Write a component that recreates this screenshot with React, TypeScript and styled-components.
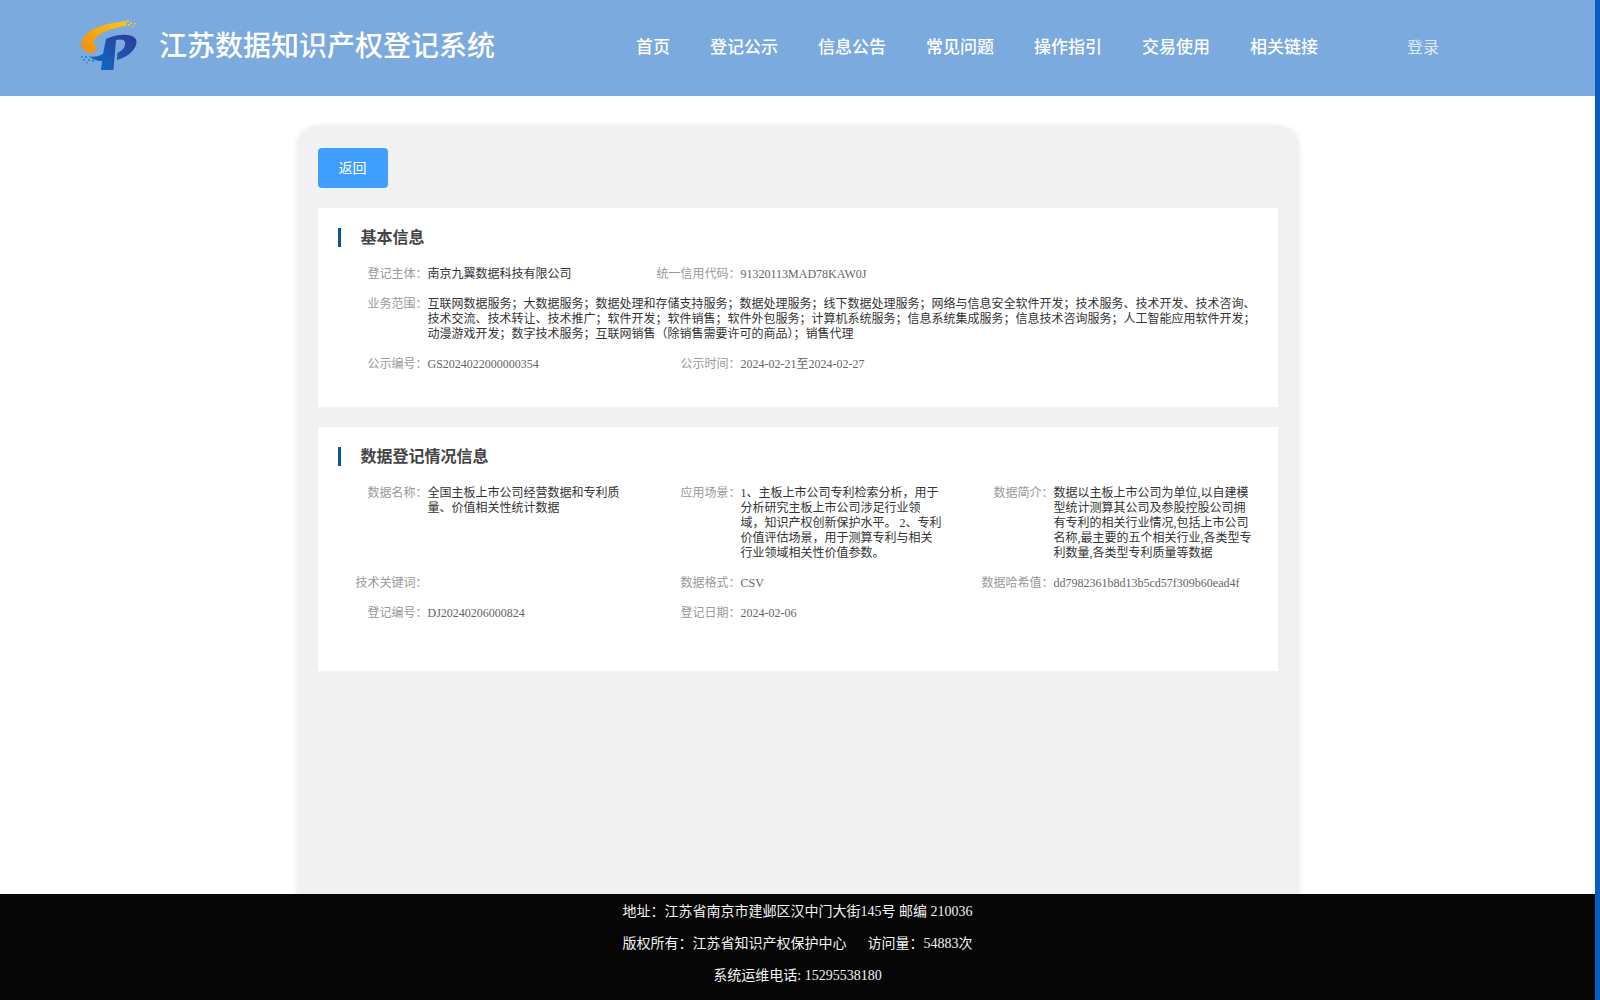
import React from 'react';
import styled, { createGlobalStyle } from 'styled-components';

const GlobalStyle = createGlobalStyle`
  html,
  body {
    margin: 0;
    padding: 0;
    height: 100%;
    overflow: hidden;
    background: #fff;
    font-family: 'Liberation Serif', 'Noto Sans CJK SC', serif;
  }
  #root {
    height: 100%;
  }
`;

const NAV_ITEMS = ['首页', '登记公示', '信息公告', '常见问题', '操作指引', '交易使用', '相关链接'];

const Logo = () => (
  <svg width="60" height="54" viewBox="8 8 60 54">
    <defs>
      <linearGradient id="arc" x1="0" y1="1" x2="1" y2="0">
        <stop offset="0" stopColor="#f08a12" />
        <stop offset="1" stopColor="#f8c81c" />
      </linearGradient>
      <linearGradient id="pee" x1="0" y1="1" x2="1" y2="0">
        <stop offset="0" stopColor="#0a6fc4" />
        <stop offset="1" stopColor="#2f3a9c" />
      </linearGradient>
    </defs>
    <path d="M57 11 C36 13 18 18 12 30 C9 38 15 42 23 44 L27 37 C24 35 23 32 25 29 C30 22 42 18 56 16 Z" fill="url(#arc)" />
    <path
      fill="url(#pee)"
      d="M36 29 C46 24 60 23 65 28 C70 34 62 46 47 50 L47.5 43 C52 41 56 37 55 32 C54 29 50 29 46 30 L43.5 60 L31 60 L32 51 C27 51 21 49 19 46 C24 48 29 46 33 44 Z"
    />
    <g fill="#f5c63a">
      <rect x="57" y="10" width="2" height="2" />
      <rect x="60" y="12" width="2" height="2" />
      <rect x="64" y="13" width="2" height="1.5" />
      <rect x="58" y="14" width="2" height="2" />
      <rect x="62" y="16" width="1.5" height="1.5" />
    </g>
    <g fill="#2f86cf">
      <rect x="11" y="46" width="2" height="1.5" />
      <rect x="15" y="46" width="2" height="2" />
      <rect x="13" y="49" width="2" height="1.5" />
      <rect x="18" y="49" width="2" height="2" />
      <rect x="22" y="50" width="2" height="2" />
      <rect x="16" y="52" width="1.5" height="1.5" />
    </g>
  </svg>
);

const App = () => {
  return (
    <Page>
      <GlobalStyle />
      <Main>
        <Header>
          <Brand>
            <Logo />
            <BrandTitle>江苏数据知识产权登记系统</BrandTitle>
          </Brand>
          <Nav>
            {NAV_ITEMS.map((item) => (
              <NavItem key={item}>{item}</NavItem>
            ))}
          </Nav>
          <Login>登录</Login>
        </Header>
        <Body>
          <Card>
            <BackButton>返回</BackButton>
            <Section $height={199}>
              <SectionTitle>基本信息</SectionTitle>
              <Fields>
                <Field label="登记主体" dark>南京九翼数据科技有限公司</Field>
                <Field label="统一信用代码">91320113MAD78KAW0J</Field>
                <Spacer />
                <Field label="业务范围" dark wide>
                  互联网数据服务；大数据服务；数据处理和存储支持服务；数据处理服务；线下数据处理服务；网络与信息安全软件开发；技术服务、技术开发、技术咨询、技术交流、技术转让、技术推广；软件开发；软件销售；软件外包服务；计算机系统服务；信息系统集成服务；信息技术咨询服务；人工智能应用软件开发；动漫游戏开发；数字技术服务；互联网销售（除销售需要许可的商品）；销售代理
                </Field>
                <Field label="公示编号">GS2024022000000354</Field>
                <Field label="公示时间">2024-02-21至2024-02-27</Field>
              </Fields>
            </Section>
            <Section $height={244}>
              <SectionTitle>数据登记情况信息</SectionTitle>
              <Fields>
                <Field label="数据名称" dark>全国主板上市公司经营数据和专利质量、价值相关性统计数据</Field>
                <Field label="应用场景" dark>
                  1、主板上市公司专利检索分析，用于分析研究主板上市公司涉足行业领域，知识产权创新保护水平。 2、专利价值评估场景，用于测算专利与相关行业领域相关性价值参数。
                </Field>
                <Field label="数据简介" dark>
                  数据以主板上市公司为单位,以自建模型统计测算其公司及参股控股公司拥有专利的相关行业情况,包括上市公司名称,最主要的五个相关行业,各类型专利数量,各类型专利质量等数据
                </Field>
                <Field label="技术关键词" />
                <Field label="数据格式">CSV</Field>
                <Field label="数据哈希值">dd7982361b8d13b5cd57f309b60ead4f</Field>
                <Field label="登记编号">DJ20240206000824</Field>
                <Field label="登记日期">2024-02-06</Field>
              </Fields>
            </Section>
          </Card>
        </Body>
        <Footer>
          <FooterLine>地址：江苏省南京市建邺区汉中门大街145号 邮编 210036</FooterLine>
          <FooterLine>版权所有：江苏省知识产权保护中心&nbsp;&nbsp;&nbsp;&nbsp;&nbsp;&nbsp;访问量：54883次</FooterLine>
          <FooterLine>系统运维电话: 15295538180</FooterLine>
        </Footer>
      </Main>
      <ScrollRail />
    </Page>
  );
};

type FieldProps = {
  label: string;
  dark?: boolean;
  wide?: boolean;
  children?: React.ReactNode;
};

const Field = ({ label, dark, wide, children }: FieldProps) => (
  <FieldRow $wide={wide}>
    <FieldLabel>{label}：</FieldLabel>
    <FieldValue $dark={dark} $wide={wide}>
      {children}
    </FieldValue>
  </FieldRow>
);

export default App;

const Page = styled.div`
  display: flex;
  width: 100%;
  height: 100%;
`;

const Main = styled.div`
  display: flex;
  flex-direction: column;
  flex: 1;
  min-width: 0;
  height: 100%;
`;

const ScrollRail = styled.div`
  width: 5px;
  flex-shrink: 0;
  background: #0a5cc2;
`;

const Header = styled.header`
  display: flex;
  align-items: center;
  flex-shrink: 0;
  height: 96px;
  padding-left: 78px;
  background: #7aaade;
  color: #fff;
`;

const Brand = styled.div`
  display: flex;
  align-items: center;
  gap: 21px;
  width: 558px;
  margin-top: -6px;
`;

const BrandTitle = styled.div`
  margin-top: 4px;
  font-size: 28px;
  line-height: 40px;
  font-weight: 500;
  white-space: nowrap;
`;

const Nav = styled.nav`
  display: flex;
  gap: 40px;
  margin-top: -1px;
`;

const NavItem = styled.a`
  font-size: 17px;
  line-height: 24px;
  font-weight: 500;
  color: #fff;
`;

const Login = styled.a`
  margin-left: 89px;
  margin-top: -1px;
  font-size: 16px;
  line-height: 24px;
  color: #dfe9f5;
`;

const Body = styled.main`
  flex: 1;
  min-height: 0;
  overflow: hidden;
  padding-top: 31px;
`;

const Card = styled.div`
  display: flex;
  flex-direction: column;
  gap: 20px;
  box-sizing: border-box;
  width: 1000px;
  height: 900px;
  margin: 0 auto;
  padding: 21px 20px;
  border-radius: 20px;
  background: #f1f1f1;
  box-shadow: 0 0 6px rgba(0, 0, 0, 0.12);
`;

const BackButton = styled.button`
  align-self: flex-start;
  width: 70px;
  height: 40px;
  padding: 0 0 2px;
  border: 0;
  border-radius: 4px;
  background: #409eff;
  color: #fff;
  font-family: inherit;
  font-size: 14px;
`;

const Section = styled.section<{ $height: number }>`
  box-sizing: border-box;
  height: ${({ $height }) => $height}px;
  padding-top: 20px;
  background: #fff;
`;

const SectionTitle = styled.h3`
  height: 19px;
  margin: 0 0 20px 20px;
  padding-left: 20px;
  border-left: 3px solid #0b5394;
  font-size: 16px;
  line-height: 19px;
  font-weight: 700;
  color: #444;
`;

const Fields = styled.div`
  display: grid;
  grid-template-columns: repeat(3, 313px);
  row-gap: 15px;
`;

const Spacer = styled.div``;

const FieldRow = styled.div<{ $wide?: boolean }>`
  display: flex;
  grid-column: ${({ $wide }) => ($wide ? '1 / -1' : 'auto')};
`;

const FieldLabel = styled.div`
  flex-shrink: 0;
  width: 110px;
  font-size: 12px;
  line-height: 15px;
  text-align: right;
  color: #999;
  white-space: nowrap;
`;

const FieldValue = styled.div<{ $dark?: boolean; $wide?: boolean }>`
  width: ${({ $wide }) => ($wide ? '830px' : '203px')};
  font-size: 12px;
  line-height: 15px;
  color: ${({ $dark }) => ($dark ? '#333' : '#666')};
`;

const Footer = styled.footer`
  flex-shrink: 0;
  box-sizing: border-box;
  height: 106px;
  padding-top: 2px;
  background: #060606;
  color: #f2f2f2;
  text-align: center;
`;

const FooterLine = styled.p`
  margin: 0;
  font-size: 14px;
  line-height: 32px;
`;
